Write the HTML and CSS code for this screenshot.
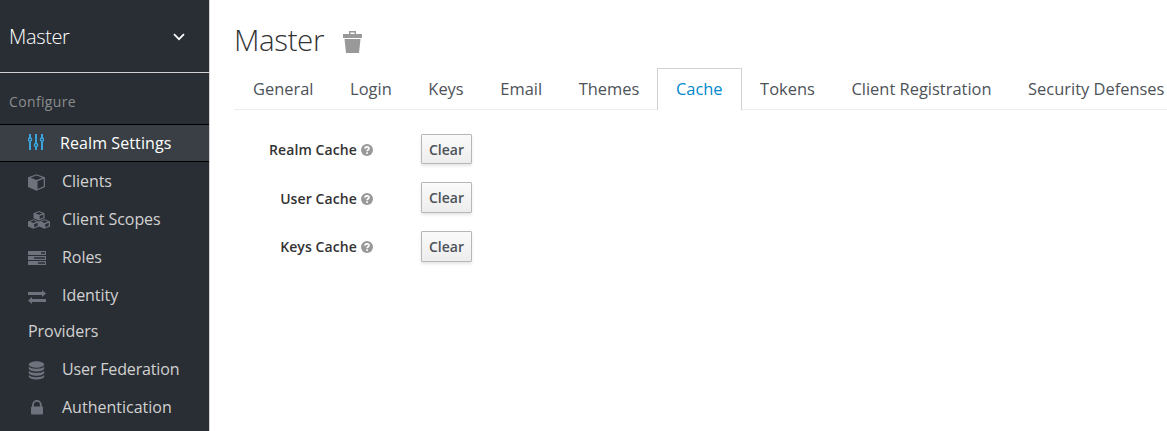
FILE: index.html
```
<!DOCTYPE html>
<html lang="en">
<head>
<meta charset="utf-8">
<title>Master - Cache</title>
<link rel="stylesheet" href="styles.css">
</head>
<body>
<div class="app">
  <aside class="sidebar">
    <div class="realm"><span>Master</span>
      <svg class="chevron" width="12" height="8" viewBox="0 0 12 8"><path d="M1 1.200L6 6.200l5-5" fill="none" stroke="#fff" stroke-width="1.700"/></svg>
    </div>
    <h2 class="section">Configure</h2>
    <ul class="menu">
      <li class="active"><a><svg class="icon sliders" width="16" height="17" viewBox="0 0 16 17"><g fill="none" stroke="#39a5dc" stroke-width="2"><path d="M2 0v4M2 7.500V16M8 0v9M8 13v3M14 0v4M14 7.500V16"/><g stroke-width="1.500"><circle cx="2" cy="5.500" r="1.600"/><circle cx="8" cy="11" r="1.600"/><circle cx="14" cy="5.500" r="1.600"/></g></g></svg><span>Realm Settings</span></a></li>
      <li><a><svg class="icon box" width="17" height="17" viewBox="0 0 17 17"><path d="M8.500.200L17 3.300v9.700L8.500 16.800 0 13V3.300z" fill="#6d727d"/><path d="M8.500 1.500l5.900 2.200-5.900 2.200-5.900-2.200zM9.500 7.200l6.200-2.400v7.500l-6.200 2.700z" fill="#292e34"/></svg><span>Clients</span></a></li>
      <li><a><svg class="icon cubes" width="22" height="18" viewBox="0 0 22 18"><defs><g id="cube"><path d="M5.500 0L11 2.200v5L5.500 9.500 0 7.200v-5z" fill="#6d727d"/><path d="M5.500 1.100l3.300 1.300-3.300 1.400-3.300-1.400zM6.200 5l3.500-1.400v2.900L6.200 8z" fill="#292e34"/></g></defs><use href="#cube" x="5.500" y="0"/><use href="#cube" x="0" y="8.200"/><use href="#cube" x="11" y="8.200"/></svg><span>Client Scopes</span></a></li>
      <li><a><svg class="icon servers" width="18" height="14" viewBox="0 0 18 14"><path d="M0 0h18v4H0zM0 5h18v4H0zM0 10h18v4H0z" fill="#6d727d"/><path d="M13 1.300h4v1.400h-4zM6 6.300h11v1.400H6zM10 11.300h7v1.400h-7z" fill="#292e34"/></svg><span>Roles</span></a></li>
      <li><a><svg class="icon arrows" width="18" height="14" viewBox="0 0 18 14"><path d="M0 2h14V0l4 3.500L14 7V5H0zM18 9H4V7L0 10.500 4 14v-2h14z" fill="#6d727d"/></svg><span>Identity<br>Providers</span></a></li>
      <li><a><svg class="icon database" width="17" height="19" viewBox="0 0 17 19"><g fill="#6d727d"><ellipse cx="8.500" cy="3.500" rx="7.700" ry="3.200"/><path d="M.800 5.500C3 8.500 14 8.500 16.200 5.500V7.500C16 11.500 1 11.500.800 7.500zM.800 9.800C3 12.800 14 12.800 16.200 9.800v2C16 15.800 1 15.800.800 11.800zM.800 14C3 17 14 17 16.200 14v1.500C16 19.500 1 19.500.800 15.500z"/></g></svg><span class="tight">User Federation</span></a></li>
      <li><a><svg class="icon lock" width="17" height="15" viewBox="0 0 17 15"><path d="M5 8V4.800a3.900 3.900 0 0 1 7.800 0V8" fill="none" stroke="#6d727d" stroke-width="1.800"/><rect x="3" y="6.500" width="12" height="8" rx=".8" fill="#6d727d"/></svg><span class="loose">Authentication</span></a></li>
    </ul>
  </aside>
  <main class="content">
    <h1 class="title"><span>Master</span>
      <svg class="trash" width="19" height="22" viewBox="0 0 19 22"><path d="M0 3h6V0h7v3h6v4H0zM7.500 1.500V3h4V1.500zM1.500 8h16L16 22H3z" fill="#999" fill-rule="evenodd"/></svg>
    </h1>
    <ul class="tabs">
      <li>General</li><li>Login</li><li>Keys</li><li>Email</li><li>Themes</li><li class="current">Cache</li><li>Tokens</li><li>Client Registration</li><li>Security Defenses</li>
    </ul>
    <div class="form">
      <div class="field"><label>Realm Cache</label><svg class="help" width="12" height="12" viewBox="0 0 12 12"><circle cx="6" cy="6" r="6" fill="#999"/><path d="M4 4.700C4 2.300 8 2.300 8 4.500 8 5.800 6.100 5.700 6.100 7.300M6.100 8.300v1.600" fill="none" stroke="#fff" stroke-width="1.600"/></svg><button class="first">Clear</button></div>
      <div class="field"><label>User Cache</label><svg class="help" width="12" height="12" viewBox="0 0 12 12"><circle cx="6" cy="6" r="6" fill="#999"/><path d="M4 4.700C4 2.300 8 2.300 8 4.500 8 5.800 6.100 5.700 6.100 7.300M6.100 8.300v1.600" fill="none" stroke="#fff" stroke-width="1.600"/></svg><button>Clear</button></div>
      <div class="field last"><label>Keys Cache</label><svg class="help" width="12" height="12" viewBox="0 0 12 12"><circle cx="6" cy="6" r="6" fill="#999"/><path d="M4 4.700C4 2.300 8 2.300 8 4.500 8 5.800 6.100 5.700 6.100 7.300M6.100 8.300v1.600" fill="none" stroke="#fff" stroke-width="1.600"/></svg><button>Clear</button></div>
    </div>
  </main>
</div>
</body>
</html>
```
FILE: styles.css
```
* { box-sizing: border-box; }
body { margin: 0; background: #fff; font-family: "Open Sans", sans-serif; color: #333; overflow: hidden; }
ul { list-style: none; margin: 0; padding: 0; }
.app { display: flex; height: 431px; }
.sidebar { flex: none; width: 210px; background: #292e34; border-right: 1px solid #d1d1d1; overflow: hidden; }
.realm { display: flex; align-items: center; justify-content: space-between; height: 73px; padding: 0 24px 0 9px; border-bottom: 1px solid #d1d1d1; color: #fff; font-size: 20px; font-weight: 300; letter-spacing: -.35px; }
.chevron { margin-top: 2px; }
.section { margin: 0; height: 51px; padding: 1px 9px 0; line-height: 56px; font-size: 14px; font-weight: 400; letter-spacing: .35px; color: #8b8d8f; }
.menu li { border: 1px solid transparent; border-width: 1px 0; }
.menu .active { background: #393f44; border-color: #000; }
.menu a { display: block; padding-left: 28px; font-size: 16px; line-height: 36px; letter-spacing: -.05px; color: #d1d1d1; white-space: nowrap; }
.menu .active a { color: #fff; letter-spacing: .1px; }
.menu .tight { letter-spacing: -.15px; }
.menu .loose { letter-spacing: 0; }
.icon { vertical-align: top; margin-right: 17px; }
.sliders { margin-top: 9px; margin-right: 16px; }
.box { margin-top: 11px; }
.cubes { margin-top: 10px; margin-right: 12px; }
.servers { margin-top: 12px; margin-right: 16px; }
.arrows { margin-top: 13px; margin-right: 16px; }
.database { margin-top: 10px; }
.lock { margin-top: 11px; }
.content { flex: 1; min-width: 0; padding-left: 24px; overflow: hidden; }
.title { display: flex; align-items: center; gap: 19px; margin: 0; height: 68px; padding-top: 10px; font-size: 29.500px; font-weight: 300; letter-spacing: -.4px; }
.trash { margin-top: 6px; }
.tabs { display: flex; height: 42px; border-bottom: 1px solid #ededec; font-size: 16.450px; white-space: nowrap; color: #4d5258; }
.tabs li { flex: none; height: 42px; padding: 0 16.600px 0 18px; border: 1px solid transparent; border-bottom: 0; line-height: 40px; }
.tabs .current { padding-right: 18px; border-color: #d1d1d1; background: #fff; color: #0088ce; border-radius: 1px 1px 0 0; }
.tabs .current + li { padding-left: 17.500px; }
.form { display: flex; flex-direction: column; gap: 17.700px; padding-top: 23.500px; }
.field { display: flex; align-items: center; height: 30.900px; font-size: 14px; font-weight: 600; }
.field label { width: 123px; padding-top: 2px; text-align: right; letter-spacing: .1px; }
.field.last label { padding-top: 0; }
.help { margin: 2px 48px 0 4px; }
.last .help { margin-top: 1px; }
button { width: 51px; height: 30.900px; padding: 0; border: 1px solid #b7b7b7; border-radius: 1px; background: linear-gradient(#fafafa, #ededed); box-shadow: 0 2px 3px rgba(3,3,3,.1); font: 600 14px "Open Sans", sans-serif; color: #4d5258; }
button.first { padding-top: 1px; }
```
